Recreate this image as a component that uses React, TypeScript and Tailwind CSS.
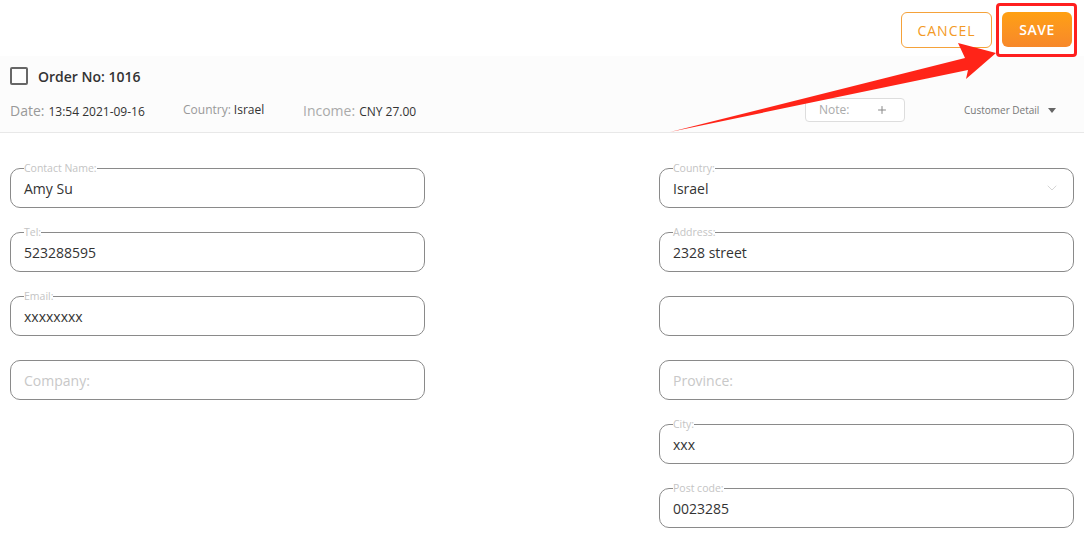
import React from 'react';
import { ChevronDown, Plus } from 'lucide-react';

type Field = { label: string; value?: string; placeholder?: string; select?: boolean };

const LEFT: Field[] = [
  { label: 'Contact Name:', value: 'Amy Su' },
  { label: 'Tel:', value: '523288595' },
  { label: 'Email:', value: 'xxxxxxxx' },
  { label: '', placeholder: 'Company:' },
];

const RIGHT: Field[] = [
  { label: 'Country:', value: 'Israel', select: true },
  { label: 'Address:', value: '2328 street' },
  { label: '', value: '' },
  { label: '', placeholder: 'Province:' },
  { label: 'City:', value: 'xxx' },
  { label: 'Post code:', value: '0023285' },
];

const OutlinedField = ({ field }: { field: Field }) => (
  <div className="relative h-[40px] border border-[#8a8a8a] rounded-[10px] flex items-center px-[13px]">
    {field.label && (
      <span className="absolute -top-[7px] left-[13px] bg-white text-[10.5px] leading-[12px] text-[#c4c4c4]">
        {field.label}
      </span>
    )}
    {field.value ? (
      <span className="text-[14px] text-[#333]">{field.value}</span>
    ) : (
      <span className="text-[14px] text-[#c8c8c8]">{field.placeholder}</span>
    )}
    {field.select && <ChevronDown className="ml-auto h-[16px] w-[16px] text-[#c0c0c0]" strokeWidth={1} />}
  </div>
);

const App = () => {
  return (
    <div className="relative w-[1084px] h-[536px] bg-white overflow-hidden" style={{ fontFamily: '"Open Sans", "Liberation Sans", sans-serif' }}>
      {/* Top actions */}
      <div className="h-[56px] flex items-start justify-end gap-[10px] pt-[12px] pr-[12px]">
        <button className="h-[36px] w-[91px] rounded-[6px] border border-[#f5a23a] text-[#f39a25] text-[14px] tracking-[1px] bg-white">
          CANCEL
        </button>
        <button className="h-[35px] w-[70px] rounded-[6px] bg-gradient-to-b from-[#ffa010] to-[#f7882a] text-white text-[14px] font-semibold tracking-[0.5px]">
          SAVE
        </button>
      </div>

      {/* Order header */}
      <div className="h-[77px] bg-[#fcfcfc] border-b border-[#e8e8e8] px-[10px] pt-[11px]">
        <div className="h-[18px] flex items-center gap-[10px]">
          <div className="w-[18px] h-[18px] border-2 border-[#666] rounded-[2px]" />
          <span className="text-[14px] font-semibold text-[#333]">Order No: 1016</span>
        </div>
        <div className="mt-[13px] h-[24px] flex items-center">
          <div className="w-[173px] flex items-baseline gap-[4px]">
            <span className="text-[14px] text-[#999]">Date:</span>
            <span className="text-[12px] text-[#333]">13:54 2021-09-16</span>
          </div>
          <div className="w-[120px] flex items-baseline gap-[3px]">
            <span className="text-[12px] text-[#999]">Country:</span>
            <span className="text-[12px] text-[#333]">Israel</span>
          </div>
          <div className="w-[502px] flex items-baseline gap-[4px]">
            <span className="text-[14px] text-[#aaa]">Income:</span>
            <span className="text-[12px] text-[#333]">CNY 27.00</span>
          </div>
          <div className="w-[100px] h-[24px] border border-[#ddd] rounded-[4px] bg-white flex items-center px-[13px]">
            <span className="text-[12px] text-[#aaa]">Note:</span>
            <Plus className="ml-auto mr-[3px] h-[12px] w-[12px] text-[#888]" strokeWidth={2} />
          </div>
          <div className="ml-[59px] flex items-center gap-[9px]">
            <span className="text-[10px] text-[#777]">Customer Detail</span>
            <span className="w-0 h-0 border-l-[4px] border-r-[4px] border-t-[5px] border-l-transparent border-r-transparent border-t-[#666]" />
          </div>
        </div>
      </div>

      {/* Form */}
      <div className="mt-[35px] grid grid-cols-2 gap-x-[234px] px-[10px]">
        <div className="flex flex-col gap-[24px]">
          {LEFT.map((f, i) => (
            <OutlinedField key={i} field={f} />
          ))}
        </div>
        <div className="flex flex-col gap-[24px]">
          {RIGHT.map((f, i) => (
            <OutlinedField key={i} field={f} />
          ))}
        </div>
      </div>

      {/* Annotation overlay */}
      <div className="absolute left-[996px] top-[3px] w-[81px] h-[54px] border-[3px] border-[#ff1f1f] rounded-[4px]" />
      <svg className="absolute left-0 top-0 pointer-events-none" width="1084" height="536">
        <polygon points="670,132 965,58 958,43 996,53 966,79 968,70" fill="#ff2418" />
      </svg>
    </div>
  );
};

export default App;
